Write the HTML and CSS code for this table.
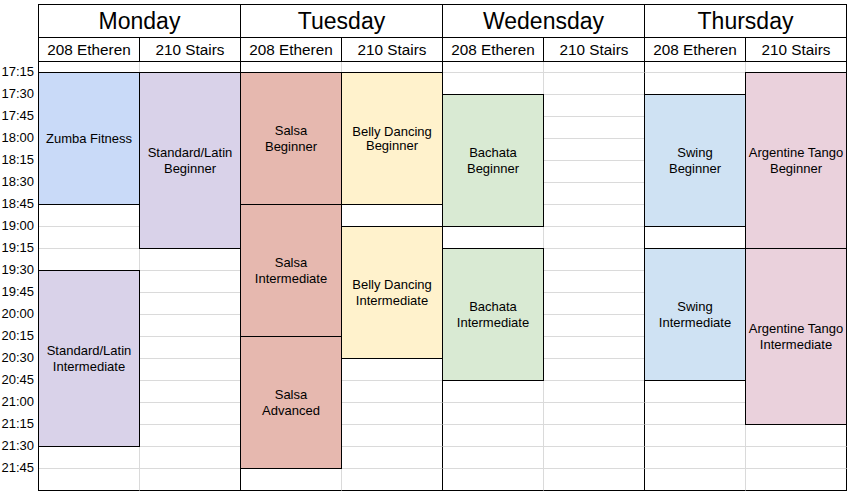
FILE: index.html
```html
<!DOCTYPE html>
<html>
<head>
<meta charset="utf-8">
<link rel="stylesheet" href="styles.css">
</head>
<body>
<div class="page">
  <div class="times">
    <div class="t">17:15</div><div class="t">17:30</div><div class="t">17:45</div>
    <div class="t">18:00</div><div class="t">18:15</div><div class="t">18:30</div><div class="t">18:45</div>
    <div class="t">19:00</div><div class="t">19:15</div><div class="t">19:30</div><div class="t">19:45</div>
    <div class="t">20:00</div><div class="t">20:15</div><div class="t">20:30</div><div class="t">20:45</div>
    <div class="t">21:00</div><div class="t">21:15</div><div class="t">21:30</div><div class="t">21:45</div>
  </div>
  <div class="sheet">
    <div class="hdr">
      <div class="day">Monday</div>
      <div class="day">Tuesday</div>
      <div class="day">Wedensday</div>
      <div class="day">Thursday</div>
      <div class="room">208 Etheren</div><div class="room">210 Stairs</div>
      <div class="room">208 Etheren</div><div class="room">210 Stairs</div>
      <div class="room">208 Etheren</div><div class="room">210 Stairs</div>
      <div class="room">208 Etheren</div><div class="room">210 Stairs</div>
    </div>
    <div class="grid">
      <!-- Monday 208 -->
      <div class="c"></div>
      <div class="blk s6 blue">Zumba Fitness</div>
      <div class="c"></div><div class="c"></div><div class="c"></div>
      <div class="blk s8 purple">Standard/Latin<br>Intermediate</div>
      <div class="c"></div><div class="c last"></div>
      <!-- Monday 210 -->
      <div class="c r"></div>
      <div class="blk s8 purple">Standard/Latin<br>Beginner</div>
      <div class="c r"></div><div class="c r"></div><div class="c r"></div><div class="c r"></div>
      <div class="c r"></div><div class="c r"></div><div class="c r"></div><div class="c r"></div>
      <div class="c r"></div><div class="c r"></div><div class="c r last"></div>
      <!-- Tuesday 208 -->
      <div class="c"></div>
      <div class="blk s6 red">Salsa<br>Beginner</div>
      <div class="blk s6 red">Salsa<br>Intermediate</div>
      <div class="blk s6 red">Salsa<br>Advanced</div>
      <div class="c last"></div>
      <!-- Tuesday 210 -->
      <div class="c r"></div>
      <div class="blk s6 yellow tight">Belly Dancing<br>Beginner</div>
      <div class="c r"></div>
      <div class="blk s6 yellow">Belly Dancing<br>Intermediate</div>
      <div class="c r"></div><div class="c r"></div><div class="c r"></div>
      <div class="c r"></div><div class="c r"></div><div class="c r last"></div>
      <!-- Wednesday 208 -->
      <div class="c"></div>
      <div class="c"></div>
      <div class="blk s6 green">Bachata<br>Beginner</div>
      <div class="c"></div>
      <div class="blk s6 green">Bachata<br>Intermediate</div>
      <div class="c"></div><div class="c"></div><div class="c"></div><div class="c"></div><div class="c last"></div>
      <!-- Wednesday 210 -->
      <div class="c r"></div>
      <div class="c r"></div><div class="c r"></div><div class="c r"></div><div class="c r"></div>
      <div class="c r"></div><div class="c r"></div><div class="c r"></div><div class="c r"></div>
      <div class="c r"></div><div class="c r"></div><div class="c r"></div><div class="c r"></div>
      <div class="c r"></div><div class="c r"></div><div class="c r"></div><div class="c r"></div>
      <div class="c r"></div><div class="c r"></div><div class="c r last"></div>
      <!-- Thursday 208 -->
      <div class="c"></div>
      <div class="c"></div>
      <div class="blk s6 sky">Swing<br>Beginner</div>
      <div class="c"></div>
      <div class="blk s6 sky">Swing<br>Intermediate</div>
      <div class="c"></div><div class="c"></div><div class="c"></div><div class="c"></div><div class="c last"></div>
      <!-- Thursday 210 -->
      <div class="c r"></div>
      <div class="blk s8 pink">Argentine Tango<br>Beginner</div>
      <div class="blk s8 pink">Argentine Tango<br>Intermediate</div>
      <div class="c r"></div><div class="c r"></div><div class="c r last"></div>
    </div>
  </div>
</div>
</body>
</html>
```
FILE: styles.css
```css
* { box-sizing: border-box; }
html, body { margin: 0; padding: 0; background: #fff; }
body { font-family: "Liberation Sans", Arial, sans-serif; color: #000; }

.page {
  display: flex;
  padding-top: 4px;
}

.times {
  width: 38px;
  padding-top: 57px;
  display: flex;
  flex-direction: column;
}
.t {
  height: 22px;
  line-height: 22px;
  font-size: 13px;
  text-align: right;
  padding-right: 4px;
}

.hdr {
  display: grid;
  grid-template-columns: repeat(8, 101px);
  grid-template-rows: 33px 24px;
  border-left: 1px solid #000;
  border-top: 1px solid #000;
}
.hdr > div {
  border-right: 1px solid #000;
  border-bottom: 1px solid #000;
  display: flex;
  align-items: center;
  justify-content: center;
  white-space: nowrap;
}
.day {
  grid-column: span 2;
  font-size: 23px;
}
.room {
  font-size: 15.3px;
}

.grid {
  display: grid;
  grid-template-columns: repeat(8, 101px);
  grid-template-rows: 11px repeat(19, 22px);
  grid-auto-flow: column;
  border-left: 1px solid #000;
}
.c {
  border-right: 1px solid #dadada;
  border-bottom: 1px solid #dadada;
}
.c.r { border-right-color: #000; }
.c.last { border-bottom-color: #000; }

.blk {
  border: 1px solid #000;
  margin: -1px 0 0 -1px;
  z-index: 1;
  display: flex;
  align-items: center;
  justify-content: center;
  text-align: center;
  font-size: 13px;
  line-height: 16px;
  padding: 0 1px;
}
.blk.tight { line-height: 14px; }
.s6 { grid-row: span 6; }
.s8 { grid-row: span 8; }

.blue { background: #c9daf8; }
.purple { background: #d9d2e9; }
.red { background: #e6b8af; }
.yellow { background: #fff2cc; }
.green { background: #d9ead3; }
.sky { background: #cfe2f3; }
.pink { background: #ead1dc; }
```
